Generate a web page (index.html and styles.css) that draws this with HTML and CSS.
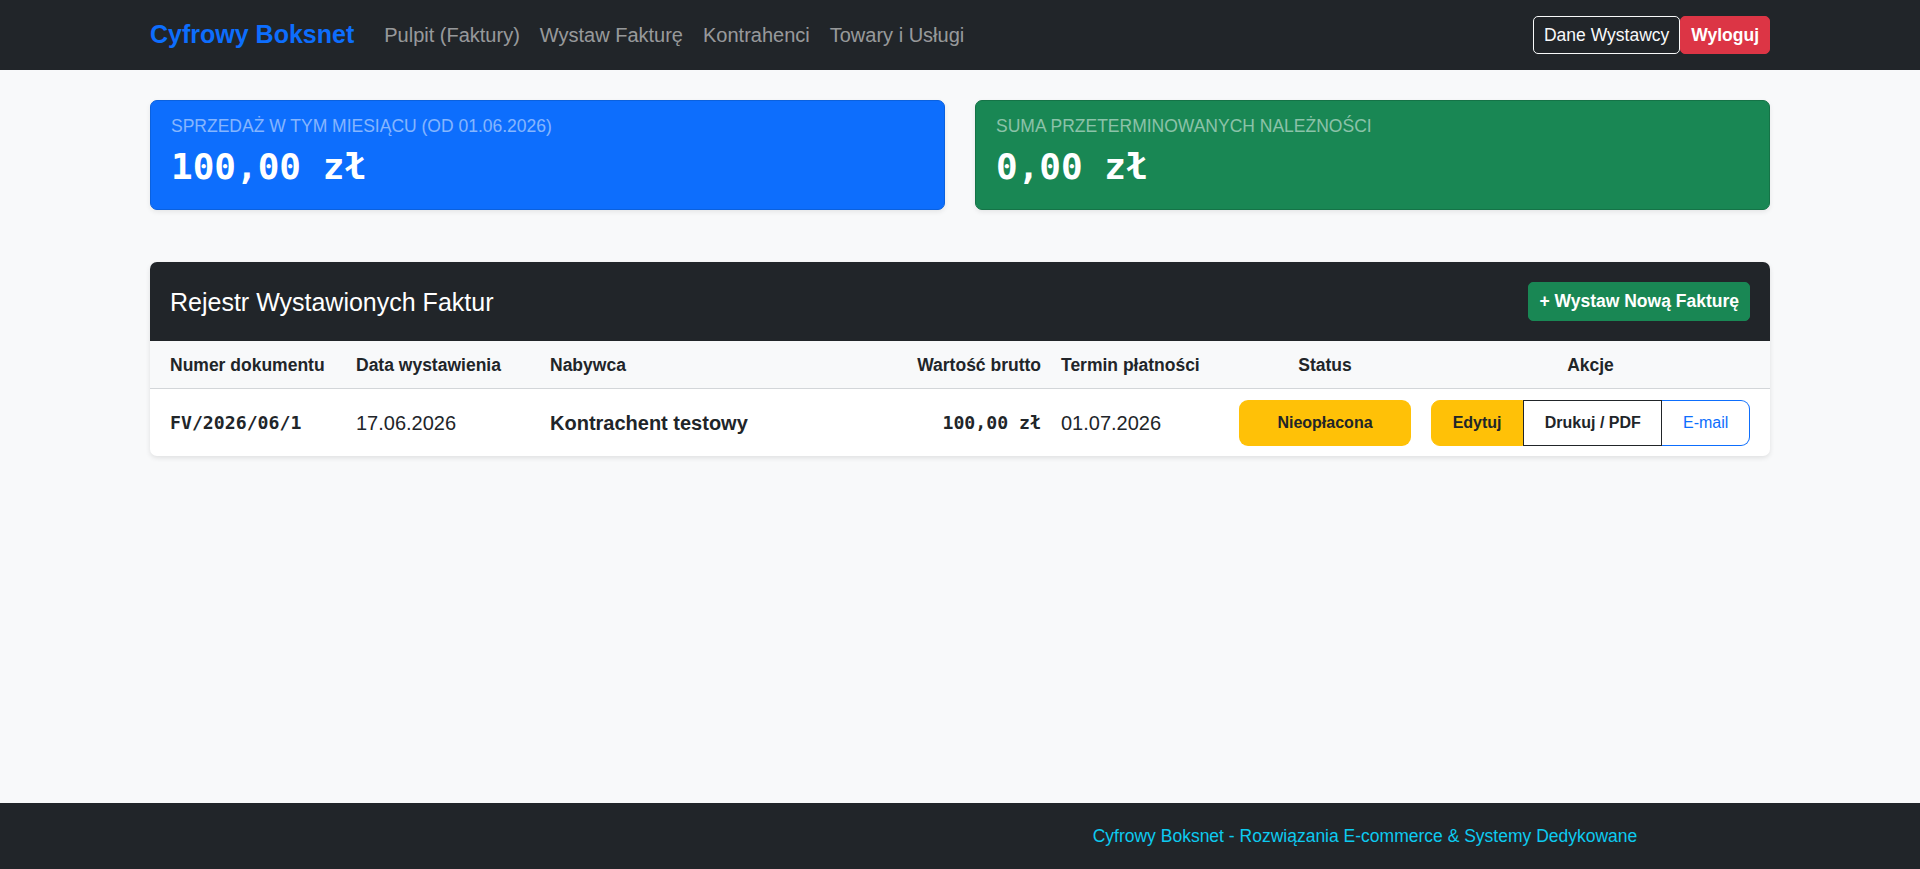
FILE: index.html
```html
<!DOCTYPE html>
<html lang="pl">

<head>
	<meta charset="UTF-8">
	<title>Cyfrowy Boksnet - Faktury</title>
	<link rel="stylesheet" href="styles.css">
</head>

<body>
	<nav class="navbar">
		<div class="container nav-inner">
			<a class="brand" href="#">Cyfrowy Boksnet</a>
			<ul class="nav-links">
				<li><a href="#">Pulpit (Faktury)</a></li>
				<li><a href="#">Wystaw Fakturę</a></li>
				<li><a href="#">Kontrahenci</a></li>
				<li><a href="#">Towary i Usługi</a></li>
			</ul>
			<div class="nav-actions">
				<a class="btn-sm btn-outline-light" href="#">Dane Wystawcy</a><a class="btn-sm btn-danger" href="#">Wyloguj</a>
			</div>
		</div>
	</nav>

	<main class="container">
		<div class="stats">
			<div class="stat-card stat-blue">
				<div class="stat-label">Sprzedaż w tym miesiącu (od 01.06.2026)</div>
				<div class="stat-value">100,00 zł</div>
			</div>
			<div class="stat-card stat-green">
				<div class="stat-label">Suma przeterminowanych należności</div>
				<div class="stat-value">0,00 zł</div>
			</div>
		</div>

		<div class="card">
			<div class="card-header">
				<h5>Rejestr Wystawionych Faktur</h5>
				<a class="btn-sm btn-success" href="#">+ Wystaw Nową Fakturę</a>
			</div>
			<table class="invoices">
				<thead>
					<tr>
						<th class="c-num">Numer dokumentu</th>
						<th class="c-date">Data wystawienia</th>
						<th class="c-buyer">Nabywca</th>
						<th class="c-value">Wartość brutto</th>
						<th class="c-due">Termin płatności</th>
						<th class="c-status">Status</th>
						<th class="c-actions">Akcje</th>
					</tr>
				</thead>
				<tbody>
					<tr>
						<td class="c-num mono">FV/2026/06/1</td>
						<td>17.06.2026</td>
						<td class="buyer">Kontrachent testowy</td>
						<td class="c-value mono">100,00 zł</td>
						<td>01.07.2026</td>
						<td class="c-status"><span class="badge">Nieopłacona</span></td>
						<td class="c-actions">
							<div class="btn-group">
								<a class="gbtn gbtn-warning" href="#">Edytuj</a>
								<a class="gbtn gbtn-dark" href="#">Drukuj / PDF</a>
								<a class="gbtn gbtn-primary" href="#">E-mail</a>
							</div>
						</td>
					</tr>
				</tbody>
			</table>
		</div>
	</main>

	<footer class="footer">
		<div class="container footer-row">
			<div></div>
			<div class="footer-text">Cyfrowy Boksnet - Rozwiązania E-commerce &amp; Systemy Dedykowane</div>
		</div>
	</footer>
</body>

</html>
```

FILE: styles.css
```css
* {
	box-sizing: border-box;
}

body {
	margin: 0;
	min-height: 869px;
	display: flex;
	flex-direction: column;
	font-family: "Liberation Sans", Arial, sans-serif;
	font-size: 20px;
	line-height: 1.5;
	color: #212529;
	background-color: #f8f9fa;
}

a {
	text-decoration: none;
}

.container {
	width: 100%;
	max-width: 1650px;
	margin: 0 auto;
	padding: 0 15px;
}

main {
	flex: 1;
}

/* navbar */
.navbar {
	background-color: #212529;
	padding: 10px 0;
}

.nav-inner {
	display: flex;
	align-items: center;
	height: 50px;
}

.brand {
	color: #0d6efd;
	font-size: 25px;
	font-weight: bold;
	margin-right: 20px;
}

.nav-links {
	display: flex;
	list-style: none;
	margin: 0;
	padding: 0;
}

.nav-links a {
	display: block;
	padding: 0 10px;
	color: rgba(255, 255, 255, .55);
	font-size: 20px;
}

.nav-actions {
	margin-left: auto;
	display: flex;
}

.btn-sm {
	display: inline-block;
	padding: 5px 10px;
	font-size: 17.5px;
	line-height: 26.25px;
	border: 1px solid transparent;
	border-radius: 5px;
}

.btn-outline-light {
	color: #f8f9fa;
	border-color: #f8f9fa;
}

.btn-danger {
	background-color: #dc3545;
	border-color: #dc3545;
	color: #fff;
	font-weight: bold;
}

.btn-success {
	background-color: #198754;
	border-color: #198754;
	color: #fff;
	font-weight: bold;
}

/* stat cards */
.stats {
	display: grid;
	grid-template-columns: 1fr 1fr;
	gap: 30px;
	margin-top: 30px;
}

.stat-card {
	height: 110px;
	padding: 15px 20px 0;
	border-radius: 7px;
	color: #fff;
	box-shadow: 0 2px 5px rgba(0, 0, 0, .08);
}

.stat-blue {
	background-color: #0d6efd;
	border: 1px solid #0b61de;
}

.stat-green {
	background-color: #198754;
	border: 1px solid #157347;
}

.stat-label {
	font-size: 17.5px;
	line-height: 21px;
	text-transform: uppercase;
	color: rgba(255, 255, 255, .5);
}

.stat-value {
	margin-top: 8px;
	font-family: "DejaVu Sans Mono", "Liberation Mono", monospace;
	font-weight: bold;
	font-size: 36px;
	line-height: 43px;
}

/* register card */
.card {
	margin-top: 52px;
	background-color: #fff;
	border-radius: 7px;
	box-shadow: 0 2px 5px rgba(0, 0, 0, .1);
	overflow: hidden;
}

.card-header {
	display: flex;
	align-items: center;
	justify-content: space-between;
	height: 79px;
	padding: 0 20px;
	background-color: #212529;
	color: #fff;
}

.card-header h5 {
	margin: 0;
	font-size: 25px;
	font-weight: normal;
	line-height: 30px;
}

.invoices {
	width: 100%;
	border-collapse: collapse;
	table-layout: fixed;
}

.invoices th {
	padding: 10.5px 10px;
	font-size: 17.5px;
	line-height: 26px;
	text-align: left;
	background-color: #f8f9fa;
	border-bottom: 1px solid #d3d6d9;
}

.invoices td {
	padding: 10.5px 10px;
	vertical-align: middle;
}

.invoices th:first-child,
.invoices td:first-child {
	padding-left: 20px;
}

.invoices th:last-child,
.invoices td:last-child {
	padding-right: 20px;
}

.c-num {
	width: 196px;
}

.c-date {
	width: 194px;
}

.c-buyer {
	width: 367px;
}

.invoices .c-value {
	width: 144px;
	text-align: right;
}

.c-due {
	width: 178px;
}

.invoices .c-status {
	width: 192px;
	text-align: center;
}

.invoices .c-actions {
	width: 349px;
	text-align: center;
}

.mono {
	font-family: "DejaVu Sans Mono", "Liberation Mono", monospace;
	font-weight: bold;
	font-size: 18.2px;
}

.buyer {
	font-weight: bold;
}

.badge {
	display: block;
	height: 46px;
	line-height: 46px;
	font-size: 16px;
	font-weight: bold;
	background-color: #ffc107;
	color: #212529;
	border-radius: 9px;
}

.btn-group {
	display: flex;
	height: 46px;
}

.gbtn {
	flex: 1 1 auto;
	display: flex;
	align-items: center;
	justify-content: center;
	padding: 0 16px;
	font-size: 16px;
	border: 1px solid transparent;
}

.gbtn-warning {
	background-color: #ffc107;
	border-color: #ffc107;
	color: #212529;
	font-weight: bold;
	border-radius: 9px 0 0 9px;
}

.gbtn-dark {
	border-color: #212529;
	color: #212529;
	font-weight: bold;
}

.gbtn-primary {
	border-color: #0d6efd;
	border-left: none;
	color: #0d6efd;
	border-radius: 0 9px 9px 0;
}

/* footer */
.footer {
	background-color: #212529;
	padding: 20px 0;
}

.footer-row {
	display: grid;
	grid-template-columns: 1fr 1fr;
}

.footer-text {
	text-align: center;
	font-size: 17.5px;
	line-height: 26px;
	color: #0dcaf0;
}
```
